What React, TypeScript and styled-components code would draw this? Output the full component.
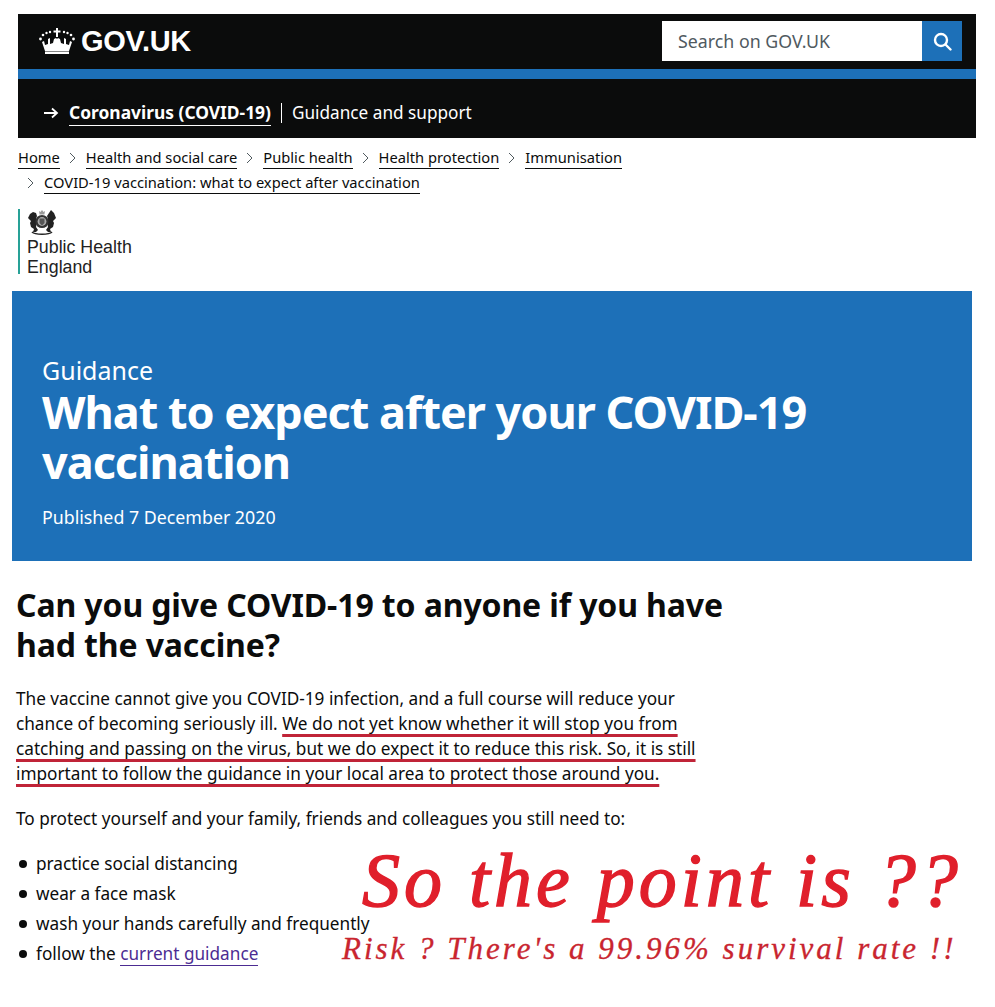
import React from 'react'
import styled, { createGlobalStyle } from 'styled-components'

const GlobalStyle = createGlobalStyle`
  html, body {
    margin: 0;
    padding: 0;
    background: #fff;
  }
  body {
    font-family: "Noto Sans", "Open Sans", sans-serif;
    color: #0b0c0c;
  }
`

const Page = styled.div`
  position: relative;
  width: 995px;
  height: 1007px;
  overflow: hidden;
  padding-top: 14px;
  box-sizing: border-box;
`

const Header = styled.header`
  margin-left: 18px;
  width: 958px;
  background: #0b0c0c;
`

const TopBar = styled.div`
  height: 55px;
  display: flex;
  align-items: center;
  justify-content: space-between;
  padding: 0 14px 0 21px;
`

const Brand = styled.div`
  display: flex;
  align-items: center;
  gap: 6px;
  color: #fff;
  font-family: "Liberation Sans", Arial, sans-serif;
  font-weight: 700;
  font-size: 29px;
  letter-spacing: -0.3px;
`

const Search = styled.div`
  display: flex;
  width: 300px;
  height: 40px;
  margin-bottom: 1px;
`

const SearchField = styled.div`
  flex: 1;
  background: #fff;
  color: #505a5f;
  font-size: 17.8px;
  line-height: 40px;
  padding-left: 16px;
`

const SearchButton = styled.div`
  width: 40px;
  background: #1d70b8;
  display: flex;
  align-items: center;
  justify-content: center;
`

const BlueRule = styled.div`
  height: 10px;
  background: #1d70b8;
`

const TopicBar = styled.div`
  height: 59px;
  box-sizing: border-box;
  padding: 9px 0 0 25px;
  display: flex;
  align-items: center;
  color: #fff;
`

const TopicLink = styled.span`
  margin-left: 10px;
  font-size: 17.4px;
  font-weight: 700;
  padding-bottom: 1px;
  border-bottom: 1px solid #fff;
  line-height: 23px;
`

const TopicNote = styled.span`
  margin-left: 10px;
  padding-left: 10px;
  border-left: 1px solid #fff;
  font-size: 17.2px;
  line-height: 20px;
`

const Crumbs = styled.nav`
  display: flex;
  flex-wrap: wrap;
  width: 640px;
  margin: 9px 0 0 18px;
  row-gap: 3px;
  font-size: 14.7px;
  line-height: 20px;
`

const Crumb = styled.span`
  display: flex;
  align-items: center;
`

const Chevron = styled.svg`
  margin: 0 10px 0 9px;
  flex: none;
`

const CrumbLink = styled.a`
  border-bottom: 1px solid #0b0c0c;
  white-space: nowrap;
  height: 21px;
`

const OrgLogo = styled.div`
  margin: 15px 0 0 18px;
  height: 65px;
  width: 130px;
  box-sizing: border-box;
  border-left: 2px solid #28a197;
  padding-left: 7px;
  font-family: "Liberation Sans", Arial, sans-serif;
  font-size: 17.8px;
  line-height: 20px;
  color: #222;
`

const Crest = styled.svg`
  display: block;
`

const Banner = styled.section`
  margin: 17px 0 0 12px;
  width: 960px;
  height: 270px;
  box-sizing: border-box;
  padding: 62px 30px 0;
  background: #1d70b8;
  color: #fff;
`

const Kicker = styled.div`
  font-size: 25px;
  line-height: 34px;
`

const Title = styled.h1`
  margin: 0;
  font-size: 45px;
  line-height: 50px;
  font-weight: 700;
  letter-spacing: -1px;
`

const Published = styled.div`
  margin-top: 18px;
  font-size: 17.8px;
  line-height: 24px;
`

const Main = styled.main`
  padding: 24px 0 0 16px;
  width: 715px;
`

const Heading = styled.h2`
  margin: 0 0 21px;
  font-size: 32px;
  line-height: 40px;
  font-weight: 700;
  letter-spacing: -0.12px;
  white-space: nowrap;
`

const Para = styled.p`
  margin: 0 0 20px;
  font-size: 17.2px;
  line-height: 25px;
  white-space: nowrap;
`

const Marked = styled.span`
  text-decoration: underline 3px #c02438;
  text-underline-offset: 4px;
`

const Bullets = styled.ul`
  margin: -2px 0 0;
  padding: 0;
  list-style: none;
  font-size: 17.2px;
  line-height: 30px;
`

const Bullet = styled.li`
  position: relative;
  padding-left: 20px;

  &::before {
    content: '';
    position: absolute;
    left: 3px;
    top: 11px;
    width: 8px;
    height: 8px;
    border-radius: 50%;
    background: #0b0c0c;
  }
`

const GuidanceLink = styled.a`
  color: #4c2c92;
  border-bottom: 1px solid #4c2c92;
`

const Scrawl = styled.div<{ $size: number; $top: number; $left: number; $gap: number; $tone: string }>`
  position: absolute;
  top: ${({ $top }) => $top}px;
  left: ${({ $left }) => $left}px;
  font-family: "Liberation Serif", serif;
  font-style: italic;
  font-size: ${({ $size }) => $size}px;
  letter-spacing: ${({ $gap }) => $gap}px;
  line-height: 1;
  color: ${({ $tone }) => $tone};
  white-space: nowrap;
  -webkit-text-stroke: ${({ $size }) => ($size > 50 ? 1.4 : 0.3)}px currentColor;
`

const CrownIcon = () => (
  <svg width="36" height="27" viewBox="0 0 36 27" fill="#fff">
    <rect x="17" y="0" width="2" height="9" />
    <rect x="14.5" y="2.5" width="7" height="2" />
    <circle cx="11" cy="4" r="1.2" />
    <circle cx="7.5" cy="5" r="1.2" />
    <circle cx="4" cy="7" r="1.3" />
    <circle cx="1.5" cy="11" r="1.4" />
    <circle cx="25" cy="4" r="1.2" />
    <circle cx="28.5" cy="5" r="1.2" />
    <circle cx="32" cy="7" r="1.3" />
    <circle cx="34.5" cy="11" r="1.4" />
    <path d="M3 14l2-1 1 4 3-1v-5l2-1v6l3-1 1-4 2-1 1 1 1-1 2 1 1 4 3 1v-6l2 1v5l3 1 1-4 2 1-3 9H6z" />
    <rect x="6" y="23.5" width="24" height="2.5" />
  </svg>
)

const SearchIcon = () => (
  <svg width="19" height="19" viewBox="0 0 19 19" fill="none" stroke="#fff" strokeWidth="2.4">
    <circle cx="8" cy="8" r="6" />
    <path d="M12.5 12.5L17.5 17.5" strokeLinecap="round" />
  </svg>
)

const ArrowIcon = () => (
  <svg width="16" height="12" viewBox="0 0 16 12" fill="none" stroke="#fff" strokeWidth="1.8">
    <path d="M1 6h13M9 1.5L14 6l-5 4.5" />
  </svg>
)

const ChevronIcon = () => (
  <Chevron width="7" height="12" viewBox="0 0 7 12" fill="none" stroke="#505a5f" strokeWidth="1">
    <path d="M1 1l5 5-5 5" />
  </Chevron>
)

// royal arms: lion on the left, unicorn on the right, shield between them
const CrestIcon = () => (
  <Crest width="30" height="28" viewBox="0 0 30 28">
    <path fill="#999" d="M12 2l1.5 1L15 1l1.5 2L18 2l-.6 3.5h-4.8z" />
    <path fill="#222" d="M1 9l2-4 3-2 3 1 1 3-1 3 1 4-1 4 2 3-2 2H6l1-3-3-2-1-4 1-2z" />
    <path fill="#222" d="M29 9l-2-5-3-3-2 3-2 3 1 3-1 4 1 4-2 3 2 2h3l-1-3 3-2 1-4-1-2z" />
    <circle cx="15" cy="12.5" r="6.6" fill="#333" />
    <circle cx="15" cy="12.5" r="4.4" fill="#aaa" />
    <path fill="#555" d="M12.5 9.5h5v4.5L15 16.5 12.5 14z" />
    <path fill="none" stroke="#222" strokeWidth="1.6" d="M5 23c3 3 17 3 20 0" />
  </Crest>
)

const trail = ['Health and social care', 'Public health', 'Health protection', 'Immunisation', 'COVID-19 vaccination: what to expect after vaccination']

export default function App() {
  return (
    <Page>
      <GlobalStyle />
      <Header>
        <TopBar>
          <Brand>
            <CrownIcon />
            GOV.UK
          </Brand>
          <Search>
            <SearchField>Search on GOV.UK</SearchField>
            <SearchButton>
              <SearchIcon />
            </SearchButton>
          </Search>
        </TopBar>
        <BlueRule />
        <TopicBar>
          <ArrowIcon />
          <TopicLink>Coronavirus (COVID-19)</TopicLink>
          <TopicNote>Guidance and support</TopicNote>
        </TopicBar>
      </Header>

      <Crumbs>
        <Crumb>
          <CrumbLink>Home</CrumbLink>
        </Crumb>
        {trail.map((label) => (
          <Crumb key={label}>
            <ChevronIcon />
            <CrumbLink>{label}</CrumbLink>
          </Crumb>
        ))}
      </Crumbs>

      <OrgLogo>
        <CrestIcon />
        Public Health
        <br />
        England
      </OrgLogo>

      <Banner>
        <Kicker>Guidance</Kicker>
        <Title>
          What to expect after your COVID-19
          <br />
          vaccination
        </Title>
        <Published>Published 7 December 2020</Published>
      </Banner>

      <Main>
        <Heading>
          Can you give COVID-19 to anyone if you have
          <br />
          had the vaccine?
        </Heading>
        <Para>
          The vaccine cannot give you COVID-19 infection, and a full course will reduce your
          <br />
          chance of becoming seriously ill. <Marked>We do not yet know whether it will stop you from</Marked>
          <br />
          <Marked>catching and passing on the virus, but we do expect it to reduce this risk. So, it is still</Marked>
          <br />
          <Marked>important to follow the guidance in your local area to protect those around you.</Marked>
        </Para>
        <Para>To protect yourself and your family, friends and colleagues you still need to:</Para>
        <Bullets>
          <Bullet>practice social distancing</Bullet>
          <Bullet>wear a face mask</Bullet>
          <Bullet>wash your hands carefully and frequently</Bullet>
          <Bullet>
            follow the <GuidanceLink>current guidance</GuidanceLink>
          </Bullet>
        </Bullets>
      </Main>

      <Scrawl $size={76} $top={842} $left={362} $gap={4} $tone="#e01f2b">So the point is ??</Scrawl>
      <Scrawl $size={31} $top={933} $left={342} $gap={3} $tone="#c9252f">Risk ? There's a 99.96% survival rate !!</Scrawl>
    </Page>
  )
}
